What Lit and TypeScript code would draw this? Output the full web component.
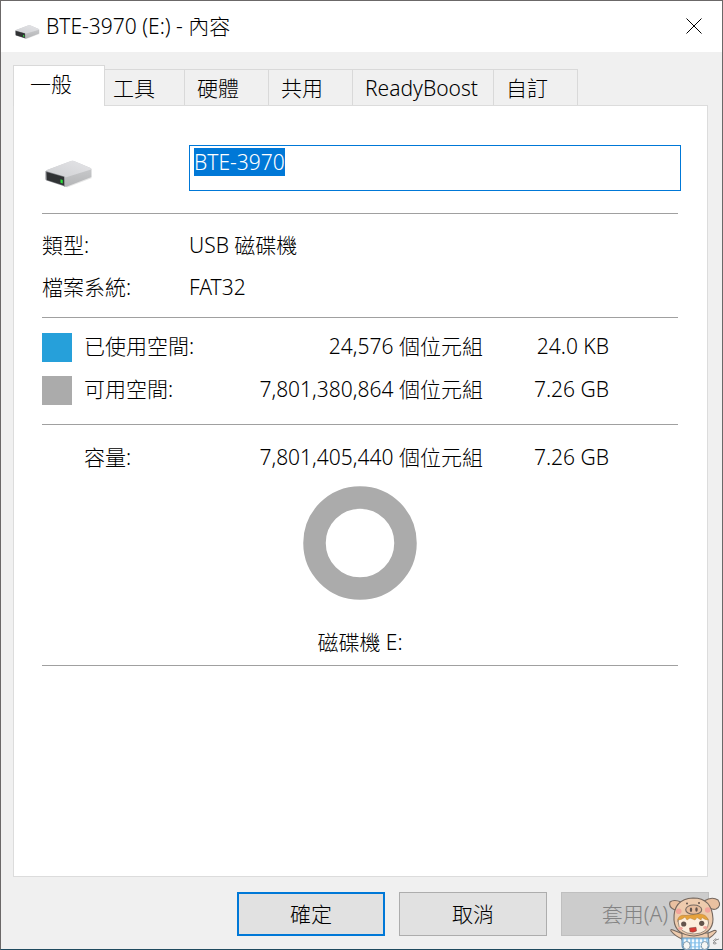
import { LitElement, html, css, nothing } from "lit";
import { customElement, state, query } from "lit/decorators.js";

const TABS = ["一般", "工具", "硬體", "共用", "ReadyBoost", "自訂"];

const USAGE = [
  { kind: "used", label: "已使用空間:", bytes: "24,576 個位元組", size: "24.0 KB" },
  { kind: "free", label: "可用空間:", bytes: "7,801,380,864 個位元組", size: "7.26 GB" },
  { kind: "total", label: "容量:", bytes: "7,801,405,440 個位元組", size: "7.26 GB" },
];

@customElement("drive-icon")
class DriveIcon extends LitElement {
  static styles = css`
    :host { display: block; }
    .art { display: block; width: 100%; height: 100%; }
  `;
  render() {
    return html`<svg class="art" viewBox="0 0 48 28" aria-hidden="true">
      <defs>
        <linearGradient id="top" x1="0" y1="1" x2="1" y2="0">
          <stop offset="0" stop-color="#cfd0d3" />
          <stop offset="1" stop-color="#e4e4e7" />
        </linearGradient>
        <linearGradient id="side" x1="0" y1="0" x2="0" y2="1">
          <stop offset="0" stop-color="#d0d1d3" />
          <stop offset="1" stop-color="#b4b5b7" />
        </linearGradient>
      </defs>
      <path d="M20 26 L45 16 L47 18 L22 27.500 Z" fill="#e6e6e6" />
      <path d="M1 11.500 Q1 10.500 2 10 L26 1 Q27.500 .5 29 1 L45.500 8 Q47 9 46.500 10 L46.500 17 L22 26.500 Q20 27 19 26.500 Z" fill="url(#side)" />
      <path d="M1 11 Q1 10.500 2 10 L26 1 Q27.500 .5 29 1 L45.500 8 Q47 9 46 9.500 L22 17 Q20 17.500 19 17 Z" fill="url(#top)" />
      <path d="M.5 11 L19.500 16.500 L20 26.500 L1.500 20.500 Q.5 20 .5 19 Z" fill="#84868a" />
      <path d="M1.500 12 L19 17 L19 25.500 L2 20 Z" fill="#303234" />
      <path d="M15.500 19.300 L17.700 20 L17.700 23.400 L15.500 22.800 Z" fill="#2be03a" />
    </svg>`;
  }
}

@customElement("usage-ring")
class UsageRing extends LitElement {
  static styles = css`
    :host { display: block; width: 114px; height: 114px; }
    .art { display: block; width: 100%; height: 100%; }
  `;
  render() {
    return html`<svg class="art" viewBox="0 0 114 114" role="img" aria-label="磁碟機 E:">
      <circle cx="57" cy="57" r="45.500" fill="none" stroke="#ababab" stroke-width="22.500" />
    </svg>`;
  }
}

@customElement("pig-mascot")
class PigMascot extends LitElement {
  static styles = css`
    :host { display: block; width: 52px; height: 52px; }
    .art { display: block; width: 100%; height: 100%; overflow: visible; }
  `;
  render() {
    return html`<svg class="art" viewBox="0 0 52 52" aria-hidden="true">
      <defs>
        <pattern id="plaid" width="4" height="4" patternUnits="userSpaceOnUse">
          <rect width="4" height="4" fill="#f4fbff" />
          <rect width="2" height="4" fill="#7dbdea" opacity=".7" />
          <rect width="4" height="1.500" fill="#7dbdea" opacity=".6" />
        </pattern>
      </defs>
      <g stroke="#75685f" stroke-width="1.100" stroke-linejoin="round" stroke-linecap="round">
        <path d="M13 36 L3 32 Q0 31 1 33 Q5 38 12 41 Z" fill="#eecbad" />
        <path d="M36 36 L44 32.500 Q47 32 46 34 Q43 38 38 41 Z" fill="#eecbad" />
        <path d="M12 35 L38 35 L38.500 42 L12 42 Z" fill="#eecbad" />
        <path d="M12 40 L38.500 40 L39 48 Q38 51.500 35 51.500 L16 51.500 Q12 51 12 47 Z" fill="url(#plaid)" stroke="#6b97b8" />
        <path d="M11 4 Q4 1 0 4 Q-2 9 5 12 Z" fill="#e9c0a0" />
        <path d="M34 3 Q42 -2 48 2 Q52 8 46 11 Q43 12 40 10 Z" fill="#e9c0a0" />
        <path d="M4 22 Q3 1 23 0 Q42 0 43 21 Q43 36 24 38 Q5 37 4 22 Z" fill="#eecbad" />
        <path d="M8 23 Q9 18 14 18 L34 18 Q38 19 38.500 25 Q38 35.500 24 36 Q8 35.500 8 23 Z" fill="#fdeedd" stroke-width=".7" />
        <ellipse cx="23.700" cy="11.700" rx="8" ry="4.700" fill="#e8bd9d" />
      </g>
      <path d="M7.500 22 Q9 16 16 17.500 L30 16 Q36 16 38.500 22 Q35 22 32 19.500 L31 22 L27 19.500 L25 22 L20 20 L17 22 L15 19 Q12 22 7.500 22 Z" fill="#e6a23c" stroke="#a97a3a" stroke-width=".4" />
      <g fill="#64544c">
        <ellipse cx="21" cy="11.700" rx="1.200" ry="2.200" />
        <ellipse cx="26.500" cy="11.500" rx="1.200" ry="2.200" />
        <circle cx="17" cy="5.500" r="1" />
        <circle cx="29" cy="5" r="1" />
        <circle cx="13.700" cy="26" r="2.600" />
        <circle cx="31.700" cy="25.300" r="2.600" />
      </g>
      <g fill="#f2a49b">
        <circle cx="8.700" cy="13.300" r="2.800" />
        <circle cx="37.700" cy="12" r="2.800" />
        <ellipse cx="10.500" cy="30.300" rx="2.200" ry="1.600" />
        <ellipse cx="35.300" cy="29.500" rx="2.200" ry="1.600" />
      </g>
      <path d="M19.500 30 L26 29.300 L26.500 33 Q23 35 20 33.800 Z" fill="#d93a33" stroke="#6e453d" stroke-width=".5" />
      <g fill="#f6f6f4" stroke="#7893a6" stroke-width=".9">
        <ellipse cx="16.700" cy="47.500" rx="3.500" ry="4" />
        <ellipse cx="34.700" cy="47.500" rx="3.500" ry="4" />
      </g>
      <path d="M43 43 Q47 39 46 42 Q41 46 45 46 Q48 45 44 44 M46 42 L49 41" fill="none" stroke="#8a8a8a" stroke-width=".9" />
    </svg>`;
  }
}

@customElement("app-root")
class AppRoot extends LitElement {
  static styles = css`
    :host {
      display: block;
      font: 21px/30px "Noto Sans", "Noto Sans CJK TC", sans-serif;
      font-weight: 300;
      color: #000;
    }
    * { box-sizing: border-box; }
    button, input { font: inherit; color: inherit; margin: 0; border-radius: 0; }
    .window {
      position: relative;
      display: flex;
      flex-direction: column;
      min-height: 100vh;
      background: #f0f0f0;
      border: 1px solid #6b6868;
      border-bottom-color: #1f4a5f;
    }
    .titlebar {
      display: flex;
      align-items: center;
      height: 51px;
      padding: 0 15px 2px 14px;
      background: #fff;
    }
    .title-icon { width: 25px; height: 16px; margin: 12px 6px 0 0; }
    .title { flex: 1; margin: 0; font: inherit; }
    .close { display: grid; place-items: center; width: 26px; height: 30px; padding: 0; border: 0; background: none; }
    .close-art { display: block; width: 16px; height: 16px; }
    .content { flex: 1; display: flex; flex-direction: column; padding: 13px 14px 0 12px; }
    .tabs { display: flex; align-items: flex-end; }
    .tab {
      height: 36px;
      min-width: 84px;
      padding: 0 15px 0 12px;
      text-align: left;
      background: #f0f0f0;
      border: 1px solid #d9d9d9;
      border-width: 1px 1px 0 0;
    }
    .tab.active {
      position: relative;
      height: 41px;
      min-width: 92px;
      margin: 0 -4px -1px 0;
      padding: 0 16px 4px;
      background: #fff;
      border-width: 1px 1px 0 1px;
    }
    .panel {
      flex: 1;
      padding: 39px 29px 0 28px;
      background: #fff;
      border: 1px solid #dcdcdc;
    }
    .name-row { display: flex; align-items: center; padding-bottom: 22px; border-bottom: 1px solid #a0a0a0; }
    .name-icon { width: 48px; height: 28px; margin: 12px 96px 0 3px; }
    .name {
      flex: 1;
      min-width: 0;
      height: 46px;
      margin-right: -3px;
      padding: 3px 4px 15px;
      line-height: 26px;
      border: 1px solid #0078d7;
      outline: 0;
      background: #fff;
    }
    .name::selection { color: #fff; background: #0078d7; }
    .facts {
      display: grid;
      grid-template-columns: 147px 1fr;
      grid-auto-rows: 42px;
      align-items: center;
      margin: 0;
      padding: 10px 0 9px;
      border-bottom: 1px solid #a0a0a0;
    }
    .facts dd { margin: 0; }
    .usage { width: 100%; margin-top: 8px; border-collapse: collapse; white-space: nowrap; }
    .usage td, .usage th { height: 43px; padding: 0 0 4px; font-weight: inherit; text-align: left; }
    .usage .swatch-cell { width: 42px; padding: 0; }
    .usage .bytes { width: 280px; text-align: right; }
    .usage .size { width: 126px; text-align: right; }
    .usage .rest { width: 69px; }
    .usage .total td, .usage .total th { height: 62px; padding: 4px 0 0; border-top: 1px solid #a0a0a0; }
    .usage .gap td { height: 12px; padding: 0; }
    .swatch { display: block; width: 30px; height: 29px; }
    .swatch.used { background: #26a0da; }
    .swatch.free { background: #ababab; }
    .ring {
      display: flex;
      flex-direction: column;
      align-items: center;
      gap: 27px;
      margin: 0;
      padding-bottom: 8px;
      border-bottom: 1px solid #a0a0a0;
    }
    .buttons { display: flex; justify-content: flex-end; gap: 14px; padding: 15px 13px 13px; }
    .button { width: 148px; height: 44px; padding: 0; background: #e1e1e1; border: 1px solid #adadad; }
    .button.primary { border: 2px solid #0078d7; }
    .button:disabled { color: #838383; background: #ccc; border-color: #bfbfbf; }
    .mascot { position: absolute; right: 0; bottom: -1px; }
  `;

  @state() private active = 0;
  @query(".name") private nameInput!: HTMLInputElement;

  firstUpdated() {
    this.nameInput.focus();
    this.nameInput.select();
  }

  render() {
    return html`<main class="window">
      <header class="titlebar">
        <drive-icon class="title-icon"></drive-icon>
        <h1 class="title">BTE-3970 (E:) - 內容</h1>
        <button class="close" aria-label="關閉">
          <svg class="close-art" viewBox="0 0 16 16"><path d="M.5 .5 L15.500 15.500 M15.500 .5 L.5 15.500" stroke="#000" stroke-width="1" /></svg>
        </button>
      </header>
      <div class="content">
        <div class="tabs" role="tablist">
          ${TABS.map((t, i) => html`<button class="tab ${i === this.active ? "active" : ""}" role="tab"
            aria-selected=${i === this.active} @click=${() => (this.active = i)}>${t}</button>`)}
        </div>
        <section class="panel" role="tabpanel">
          <div class="name-row">
            <drive-icon class="name-icon"></drive-icon>
            <input class="name" type="text" aria-label="磁碟機名稱" value="BTE-3970" spellcheck="false" />
          </div>
          <dl class="facts">
            <dt>類型:</dt><dd>USB 磁碟機</dd>
            <dt>檔案系統:</dt><dd>FAT32</dd>
          </dl>
          <table class="usage">
            ${USAGE.map((u) => html`
              ${u.kind === "total" ? html`<tr class="gap"><td colspan="5"></td></tr>` : nothing}
              <tr class=${u.kind}>
                <td class="swatch-cell">${u.kind === "total" ? nothing : html`<span class="swatch ${u.kind}"></span>`}</td>
                <th scope="row">${u.label}</th>
                <td class="bytes">${u.bytes}</td>
                <td class="size">${u.size}</td>
                <td class="rest"></td>
              </tr>`)}
          </table>
          <figure class="ring">
            <usage-ring></usage-ring>
            <figcaption>磁碟機 E:</figcaption>
          </figure>
        </section>
      </div>
      <footer class="buttons">
        <button class="button primary">確定</button>
        <button class="button">取消</button>
        <button class="button" disabled>套用(A)</button>
      </footer>
      <pig-mascot class="mascot"></pig-mascot>
    </main>`;
  }
}
